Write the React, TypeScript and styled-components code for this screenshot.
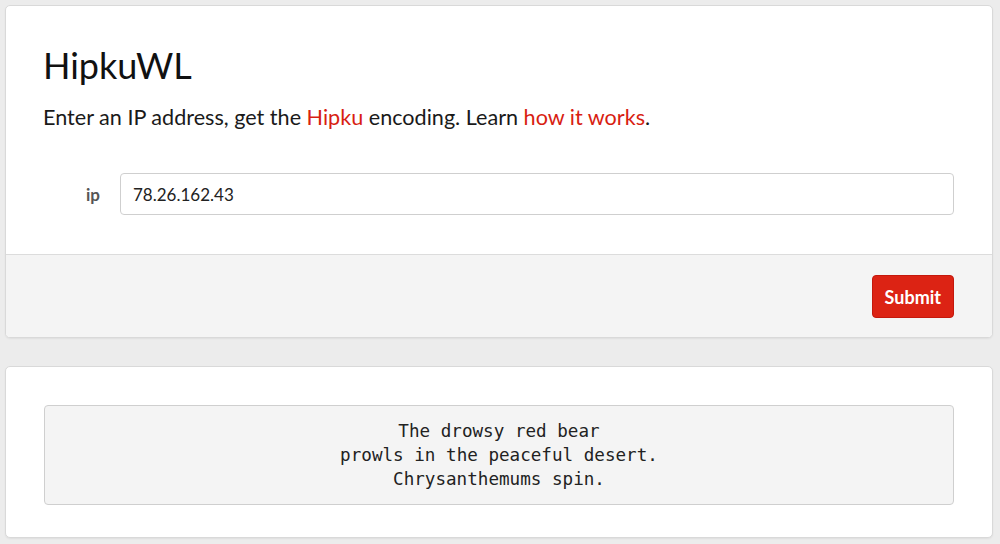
import React from "react";
import styled, { createGlobalStyle } from "styled-components";

const Global = createGlobalStyle`
  html, body { margin: 0; padding: 0; background: #ececec; }
  body { font-family: "Source Sans Pro", "Lato", "Noto Sans", sans-serif; color: #1a1a1a; }
`;

const Page = styled.div`
  display: flex;
  flex-direction: column;
  gap: 28px;
  padding: 5px 7px 6px 5px;
`;

const Card = styled.section`
  background: #fff;
  border: 1px solid #d9d9d9;
  border-radius: 5px;
  box-shadow: 0 1px 2px rgba(0, 0, 0, 0.06);
  overflow: hidden;
`;

const Body = styled.div<{ $pad: string }>`
  padding: ${(p) => p.$pad};
`;

const Title = styled.h1`
  margin: 0;
  font-size: 36px;
  font-weight: 400;
  line-height: 44px;
  color: #111;
`;

const Lead = styled.p`
  margin: 16px 0 0;
  font-size: 21.6px;
  line-height: 28px;
  color: #1a1a1a;
`;

const Link = styled.a`
  color: #d81e12;
  text-decoration: none;
`;

const FieldRow = styled.div`
  display: flex;
  align-items: center;
  margin-top: 42px;
  gap: 20px;
`;

const Label = styled.label`
  width: 57px;
  text-align: right;
  font-size: 17px;
  font-weight: 700;
  color: #555;
`;

const Input = styled.input`
  flex: 1;
  height: 42px;
  box-sizing: border-box;
  border: 1px solid #cfcfcf;
  border-radius: 4px;
  padding: 0 12px;
  font-family: "Source Sans Pro", "Lato", "Noto Sans", sans-serif;
  font-size: 17px;
  color: #222;
  outline: none;
`;

const Footer = styled.div`
  background: #f4f4f4;
  border-top: 1px solid #dcdcdc;
  display: flex;
  justify-content: flex-end;
  padding: 20px 38px 19px;
`;

const Button = styled.button`
  height: 43px;
  padding: 0 12px;
  background: #dc2314;
  border: 1px solid #c4180c;
  border-radius: 4px;
  color: #fff;
  font-family: "Source Sans Pro", "Lato", "Noto Sans", sans-serif;
  font-weight: 700;
  font-size: 18px;
`;

const Poem = styled.pre`
  margin: 0;
  background: #f4f4f4;
  border: 1px solid #cfcfcf;
  border-radius: 4px;
  padding: 13px 0;
  text-align: center;
  font-family: "DejaVu Sans Mono", "Liberation Mono", monospace;
  font-size: 17.6px;
  line-height: 24px;
  color: #222;
`;

export default function App() {
  return (
    <>
      <Global />
      <Page>
        <Card>
          <Body $pad="37px 38px 39px 37px">
            <Title>HipkuWL</Title>
            <Lead>
              Enter an IP address, get the <Link href="#">Hipku</Link> encoding. Learn{" "}
              <Link href="#">how it works</Link>.
            </Lead>
            <FieldRow>
              <Label>ip</Label>
              <Input defaultValue="78.26.162.43" />
            </FieldRow>
          </Body>
          <Footer>
            <Button>Submit</Button>
          </Footer>
        </Card>
        <Card>
          <Body $pad="38px 38px 32px">
            <Poem>
              {"The drowsy red bear\nprowls in the peaceful desert.\nChrysanthemums spin."}
            </Poem>
          </Body>
        </Card>
      </Page>
    </>
  );
}
